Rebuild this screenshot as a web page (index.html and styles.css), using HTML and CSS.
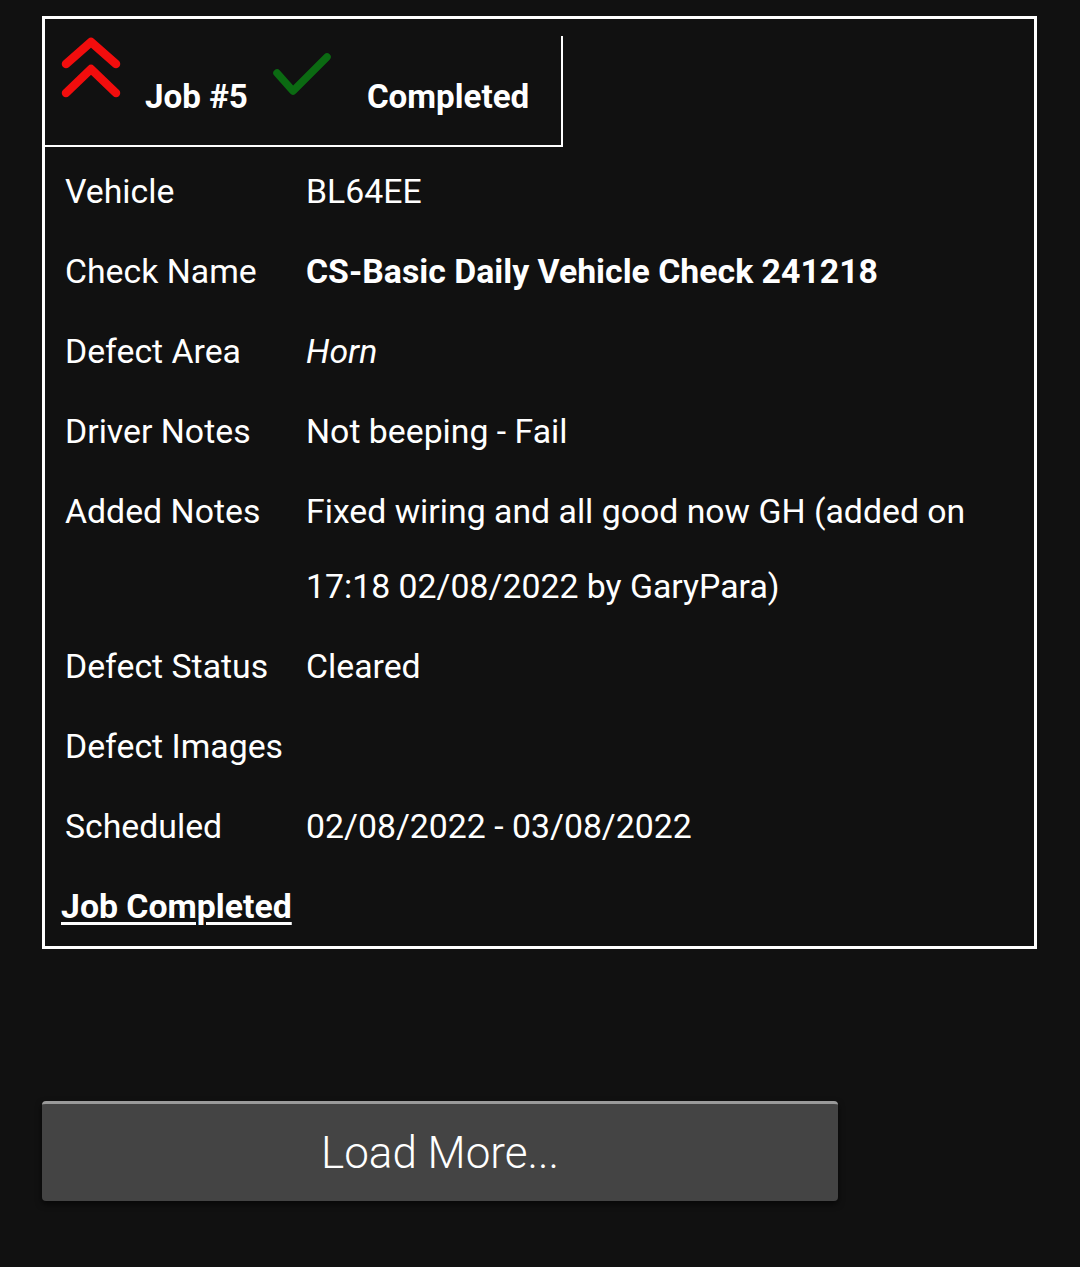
FILE: index.html
```html
<!DOCTYPE html>
<html lang="en">
  <head>
    <meta charset="UTF-8" />
    <meta name="viewport" content="width=device-width, initial-scale=1.0" />
    <title>Jobs</title>
    <link rel="stylesheet" href="styles.css">
  </head>
  <body>
    <div class="job-list">
      <div class="job-card">
        <div class="job-head">
          <svg class="priority" width="60" height="64" viewBox="0 0 60 64">
            <path d="M5 27 L30 5 L55 27 M5 56 L30 32 L55 56" fill="none" stroke="#f20d0d" stroke-width="8.5" stroke-linecap="round" stroke-linejoin="round" />
          </svg>
          <span class="job-no">Job #5</span>
          <svg class="tick" width="60" height="46" viewBox="0 0 60 46">
            <path d="M5 22 L21 40 L55 6" fill="none" stroke="#0b6a12" stroke-width="7.5" stroke-linecap="round" stroke-linejoin="round" />
          </svg>
          <span class="job-status">Completed</span>
        </div>

        <table class="job-info">
          <tr><td class="label">Vehicle</td><td>BL64EE</td></tr>
          <tr><td class="label">Check Name</td><td class="strong">CS-Basic Daily Vehicle Check 241218</td></tr>
          <tr><td class="label">Defect Area</td><td class="area">Horn</td></tr>
          <tr><td class="label">Driver Notes</td><td>Not beeping - Fail</td></tr>
          <tr><td class="label">Added Notes</td><td>Fixed wiring and all good now GH (added on 17:18 02/08/2022 by GaryPara)</td></tr>
          <tr><td class="label">Defect Status</td><td>Cleared</td></tr>
          <tr><td class="label">Defect Images</td><td></td></tr>
          <tr><td class="label">Scheduled</td><td>02/08/2022 - 03/08/2022</td></tr>
        </table>

        <a class="job-link" href="#">Job Completed</a>
      </div>

      <button class="load-more">Load More...</button>
    </div>
  </body>
</html>
```

FILE: styles.css
```css
body {
  margin: 0;
  background: #111111;
  color: #ffffff;
  font-family: Roboto, "Noto Sans", sans-serif;
}

.job-list {
  padding: 16px 43px 66px 42px;
}

.job-card {
  border: 3px solid #ffffff;
  padding: 17px 0 0 0;
}

/* header */
.job-head {
  display: flex;
  align-items: flex-start;
  width: 516px;
  height: 109px;
  border-right: 2px solid #ffffff;
  border-bottom: 2px solid #ffffff;
}

.priority {
  margin: 1px 0 0 16px;
}

.job-no,
.job-status {
  font-size: 33.2px;
  font-weight: 700;
  line-height: 40px;
  margin-top: 41px;
}

.job-no {
  margin-left: 24px;
}

.tick {
  margin: 15px 0 0 24px;
}

.job-status {
  margin-left: 35px;
}

/* details */
.job-info {
  border-collapse: collapse;
  margin: 4px 0 0 15px;
  font-size: 33.8px;
  width: 960px;
}

.job-info td {
  padding: 2.5px 5px;
  line-height: 75px;
  vertical-align: top;
}

.job-info .label {
  width: 231px;
  white-space: nowrap;
}

.job-info .strong {
  font-weight: 700;
}

.job-info .area {
  font-style: italic;
}

.job-link {
  display: block;
  width: fit-content;
  margin: 2px 0 0 16px;
  color: #ffffff;
  font-size: 33.8px;
  font-weight: 700;
  line-height: 78px;
  text-decoration: underline;
  text-decoration-thickness: 3px;
  text-underline-offset: 4px;
}

.load-more {
  display: block;
  width: 80%;
  height: 100px;
  margin-top: 152px;
  background: #444444;
  color: #ffffff;
  border: none;
  border-top: 3px solid #9a9a9a;
  border-radius: 4px;
  box-shadow: 0 3px 6px rgba(0, 0, 0, 0.6);
  font-family: Roboto, sans-serif;
  font-size: 44px;
  font-weight: 300;
}
```
